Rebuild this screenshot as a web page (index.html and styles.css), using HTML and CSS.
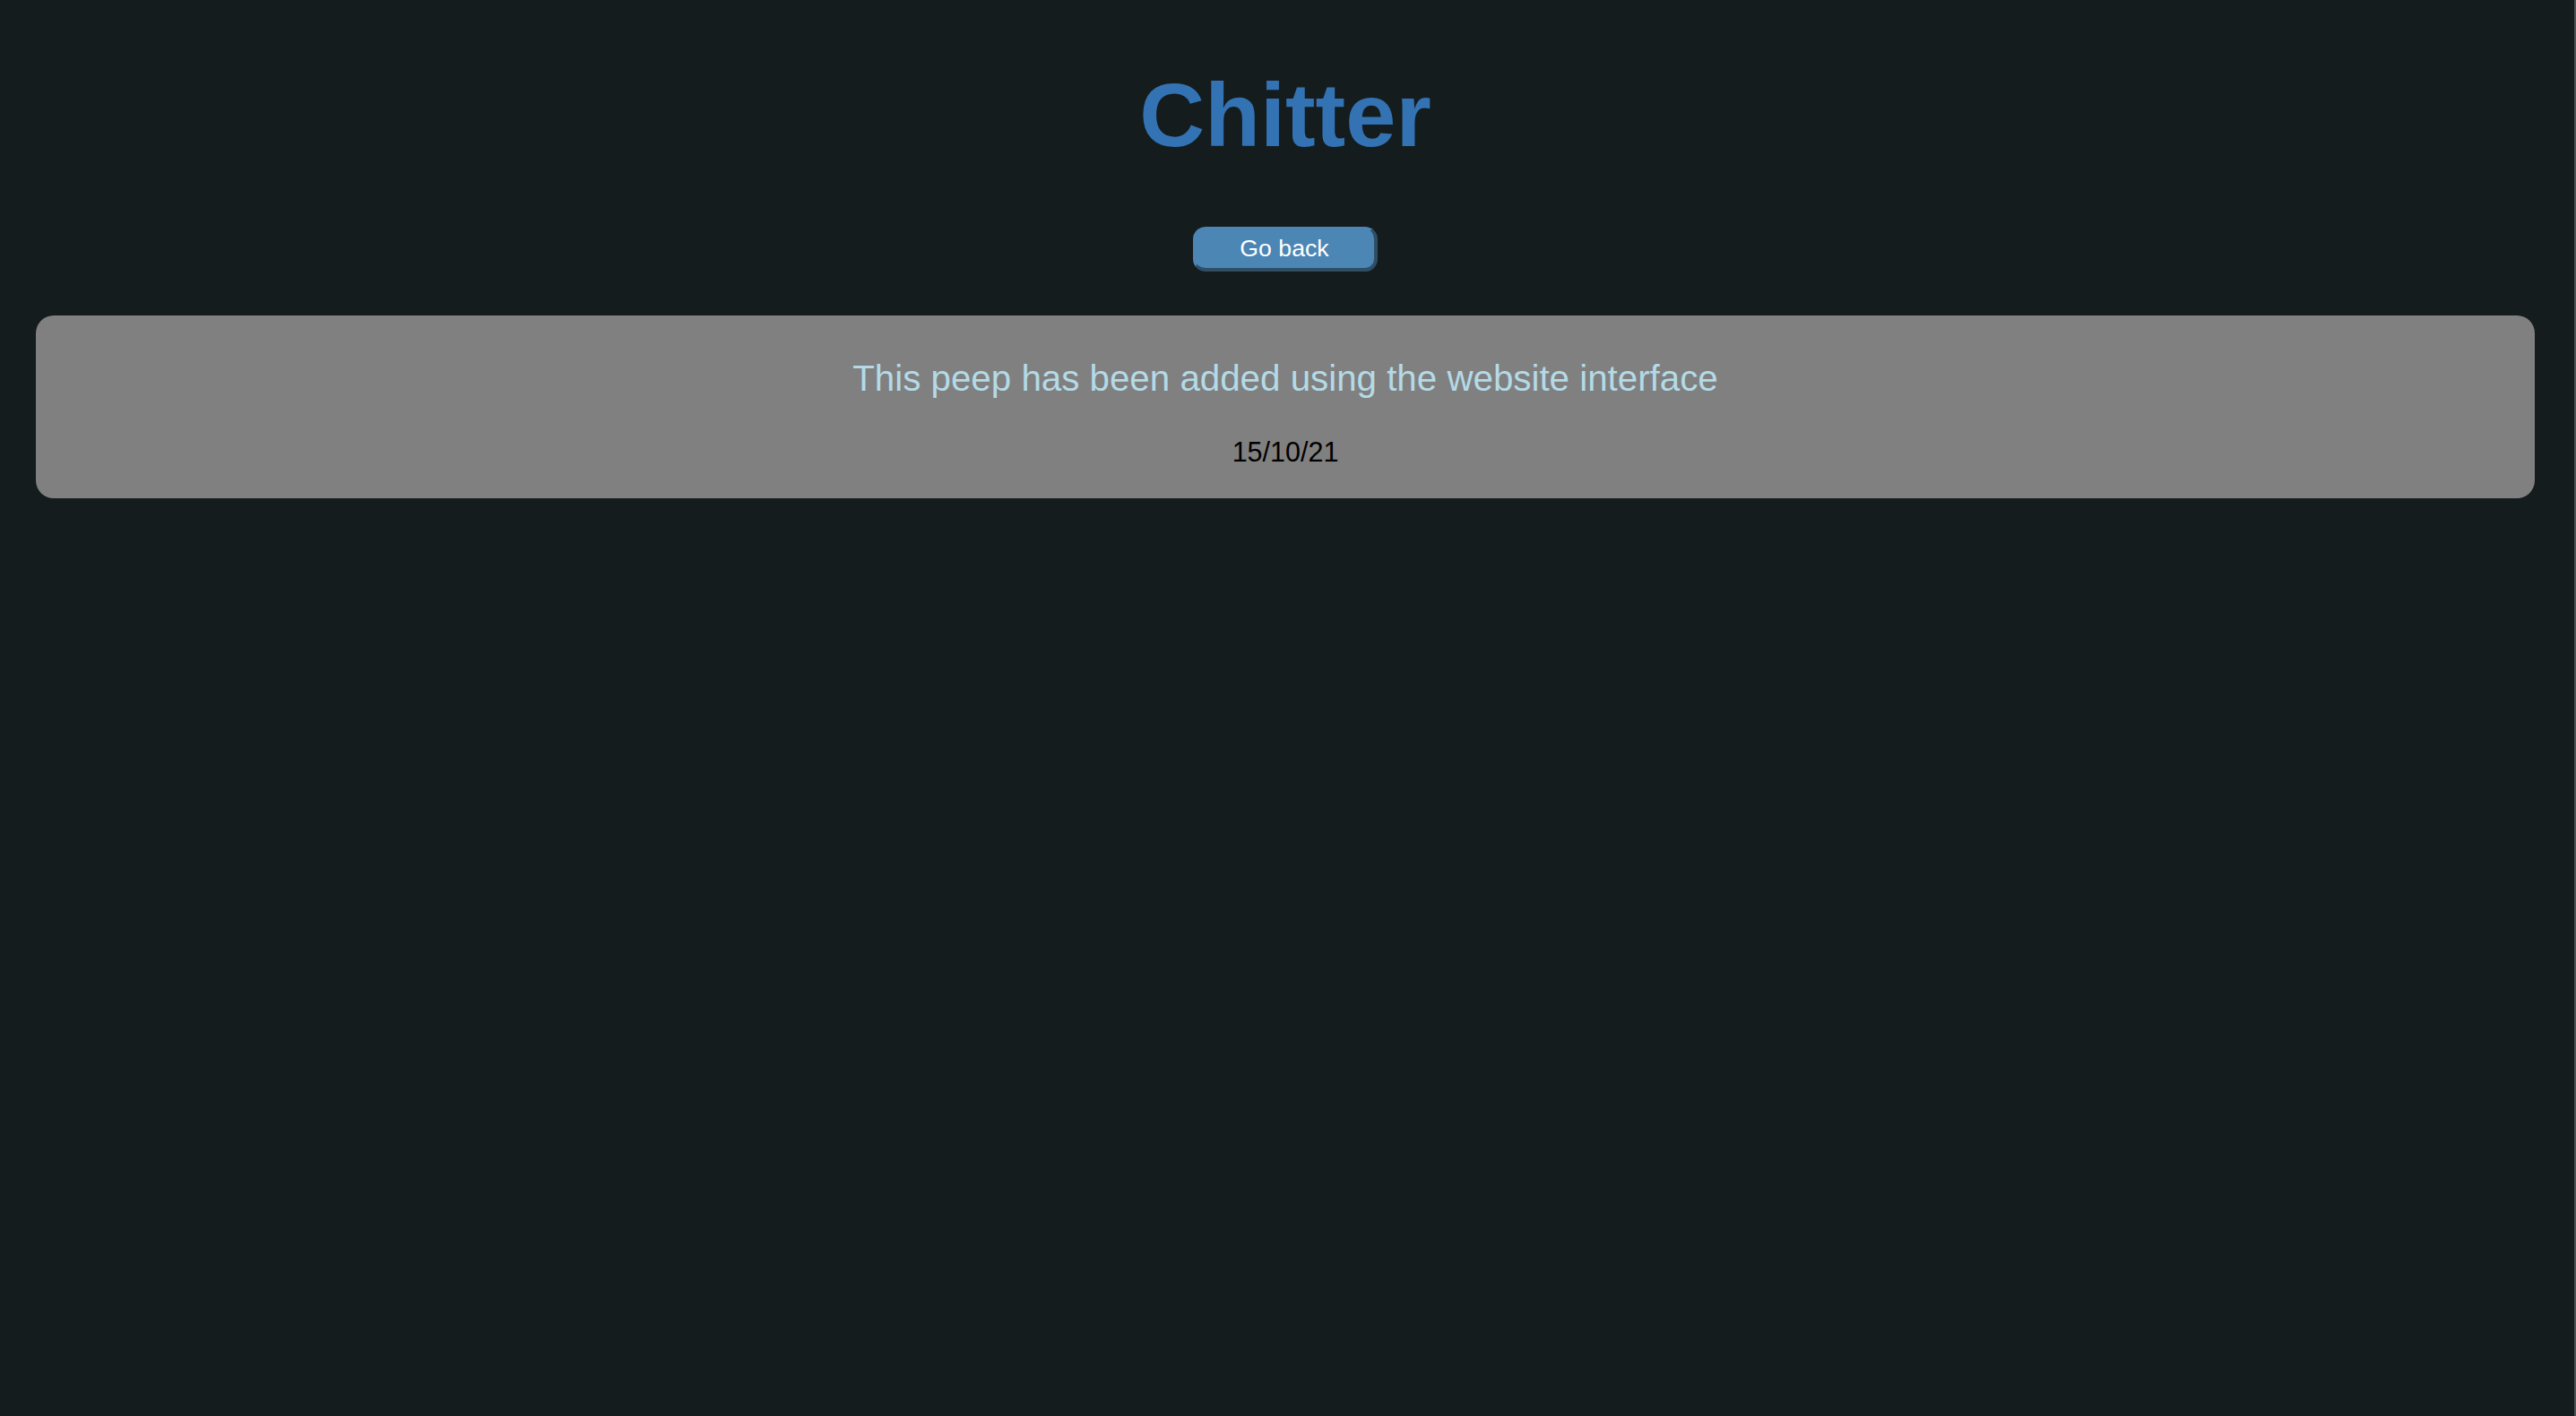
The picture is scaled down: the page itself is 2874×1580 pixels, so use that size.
FILE: index.html
```html
<!DOCTYPE html>
<html lang="en">
<head>
<meta charset="utf-8">
<title>Chitter</title>
<link rel="stylesheet" href="styles.css">
</head>
<body>
<main class="page">
  <h1 class="title">Chitter</h1>
  <div class="actions">
    <button class="back-btn" type="button">Go back</button>
  </div>
  <section class="peep-card">
    <p class="peep-text">This peep has been added using the website interface</p>
    <p class="peep-date">15/10/21</p>
  </section>
</main>
</body>
</html>
```

FILE: styles.css
```css
html {
  background: #151c1e;
  border-right: 2px solid #4d5355;
  min-height: 100%;
}

body {
  margin: 0;
  font-family: "Liberation Sans", Arial, Helvetica, sans-serif;
  background: #151c1e;
}

.page {
  display: flex;
  flex-direction: column;
  align-items: stretch;
  padding: 71px 44px 0 40px;
}

.title {
  margin: 0 0 67px;
  text-align: center;
  font-size: 101px;
  line-height: 115px;
  font-weight: bold;
  color: #3373b4;
}

.actions {
  display: flex;
  justify-content: center;
  margin-bottom: 49px;
}

.back-btn {
  box-sizing: border-box;
  width: 206px;
  height: 50px;
  padding: 0;
  font-family: "Liberation Sans", Arial, Helvetica, sans-serif;
  font-size: 26.67px;
  color: #ffffff;
  background: #4c86b5;
  border-style: solid;
  border-width: 2px 4px 4px 2px;
  border-color: #4c86b5 #2f4e66 #2f4e66 #4c86b5;
  border-radius: 14px;
}

.peep-card {
  background: #808080;
  border-radius: 20px;
  padding: 48px 0 34px;
  text-align: center;
}

.peep-text {
  margin: 0 0 41px;
  font-size: 40.3px;
  line-height: 46px;
  color: #b4dae6;
}

.peep-date {
  margin: 0;
  font-size: 30.5px;
  line-height: 35px;
  color: #000000;
}
```
